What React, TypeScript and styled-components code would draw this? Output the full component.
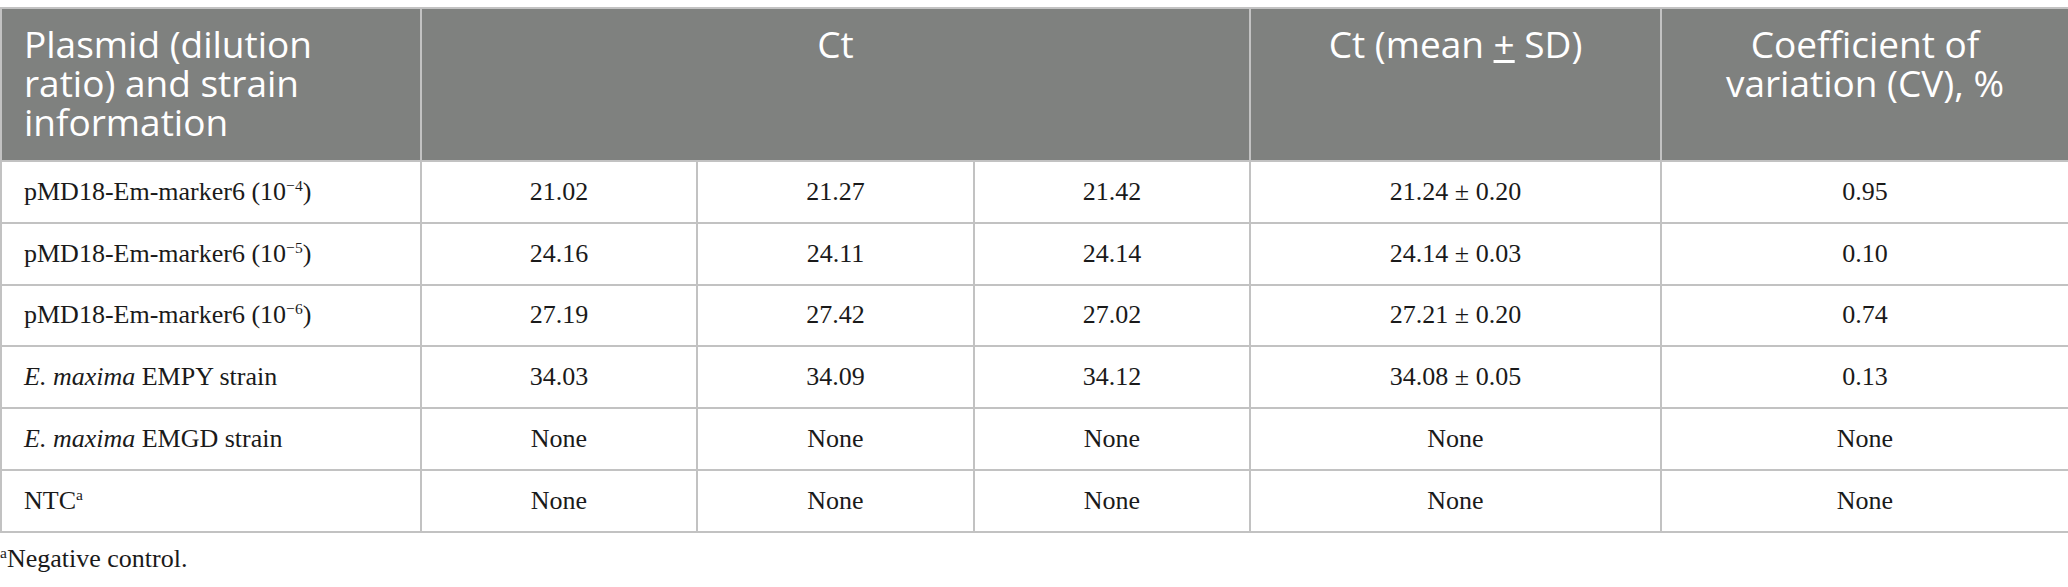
import styled, { createGlobalStyle } from 'styled-components';

const GlobalStyle = createGlobalStyle`
  html, body {
    margin: 0;
    padding: 0;
    background: #ffffff;
  }
`;

const Page = styled.div`
  padding-top: 7px;
  width: 2068px;
`;

const Table = styled.table`
  width: 2068px;
  table-layout: fixed;
  border-collapse: collapse;
`;

const HeadCell = styled.th<{ $align?: 'left' | 'center' }>`
  background: #7f817f;
  color: #ffffff;
  font-family: 'Open Sans', 'Noto Sans', sans-serif;
  font-weight: 400;
  font-size: 37px;
  line-height: 39px;
  text-align: ${(p) => p.$align || 'center'};
  vertical-align: top;
  height: 153px;
  padding: 15px 22px 0;
  border: 2px solid #c2c2c2;
  box-sizing: border-box;
`;

const Cell = styled.td<{ $align?: 'left' | 'center' }>`
  font-family: 'Liberation Serif', 'Times New Roman', serif;
  font-size: 26px;
  color: #1a1a1a;
  text-align: ${(p) => p.$align || 'center'};
  vertical-align: middle;
  height: 61.8px;
  padding: 0 22px;
  border: 2px solid #c2c2c2;
  box-sizing: border-box;
  white-space: nowrap;
`;

const Sup = styled.sup`
  font-size: 0.6em;
  line-height: 0;
  vertical-align: 0.55em;
`;

const Footnote = styled.p`
  margin: 11px 0 0;
  font-family: 'Liberation Serif', 'Times New Roman', serif;
  font-size: 26px;
  color: #1a1a1a;
`;

type Row = {
  label: React.ReactNode;
  values: string[];
};

const rows: Row[] = [
  {
    label: <>pMD18-Em-marker6 (10<Sup>−4</Sup>)</>,
    values: ['21.02', '21.27', '21.42', '21.24 ± 0.20', '0.95'],
  },
  {
    label: <>pMD18-Em-marker6 (10<Sup>−5</Sup>)</>,
    values: ['24.16', '24.11', '24.14', '24.14 ± 0.03', '0.10'],
  },
  {
    label: <>pMD18-Em-marker6 (10<Sup>−6</Sup>)</>,
    values: ['27.19', '27.42', '27.02', '27.21 ± 0.20', '0.74'],
  },
  {
    label: <><i>E. maxima</i> EMPY strain</>,
    values: ['34.03', '34.09', '34.12', '34.08 ± 0.05', '0.13'],
  },
  {
    label: <><i>E. maxima</i> EMGD strain</>,
    values: ['None', 'None', 'None', 'None', 'None'],
  },
  {
    label: <>NTC<Sup>a</Sup></>,
    values: ['None', 'None', 'None', 'None', 'None'],
  },
];

export default function App() {
  return (
    <Page>
      <GlobalStyle />
      <Table>
        <colgroup>
          <col style={{ width: 420 }} />
          <col style={{ width: 276 }} />
          <col style={{ width: 277 }} />
          <col style={{ width: 276 }} />
          <col style={{ width: 411 }} />
          <col style={{ width: 408 }} />
        </colgroup>
        <thead>
          <tr>
            <HeadCell $align="left">Plasmid (dilution ratio) and strain information</HeadCell>
            <HeadCell colSpan={3}>Ct</HeadCell>
            <HeadCell>
              Ct (mean <u>+</u> SD)
            </HeadCell>
            <HeadCell>Coefficient of variation (CV), %</HeadCell>
          </tr>
        </thead>
        <tbody>
          {rows.map((r, i) => (
            <tr key={i}>
              <Cell $align="left">{r.label}</Cell>
              {r.values.map((v, j) => (
                <Cell key={j}>{v}</Cell>
              ))}
            </tr>
          ))}
        </tbody>
      </Table>
      <Footnote>
        <Sup>a</Sup>Negative control.
      </Footnote>
    </Page>
  );
}
